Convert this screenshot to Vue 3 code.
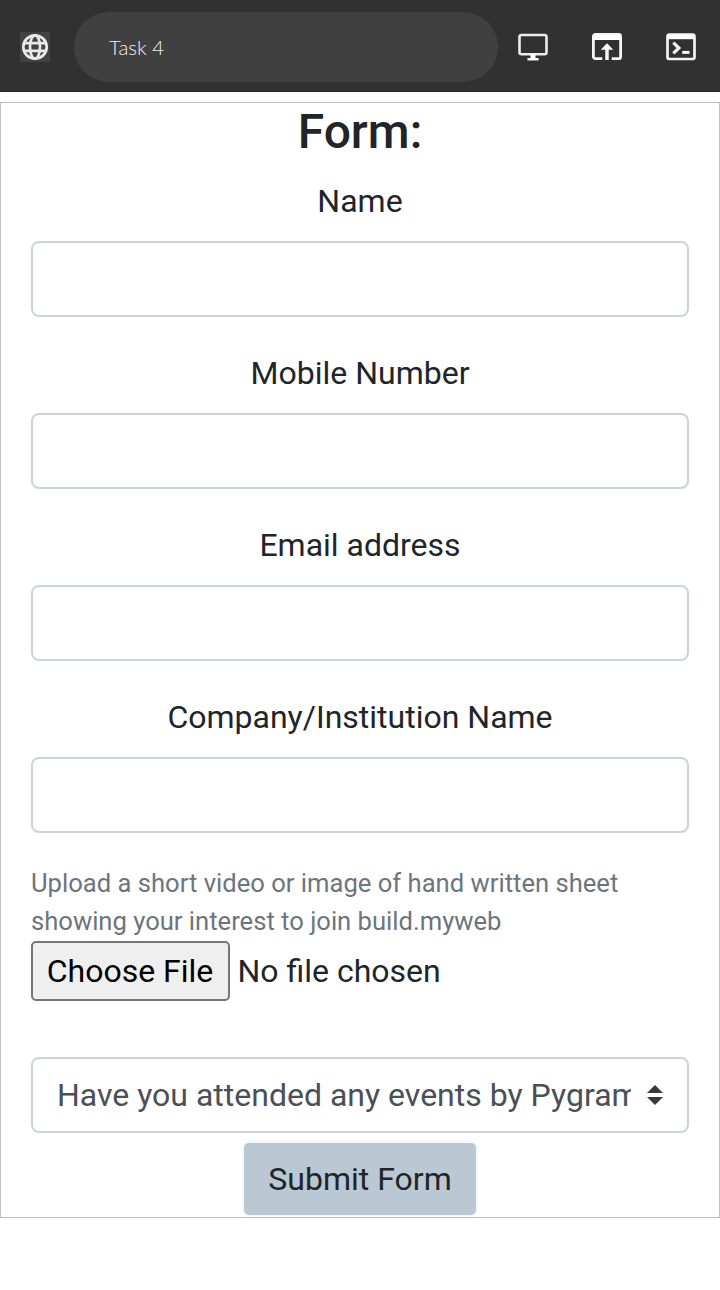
<script setup>
const fields = ['Name', 'Mobile Number', 'Email address', 'Company/Institution Name']
</script>

<template>
  <div class="page">
    <header class="toolbar">
      <span class="globe">
        <svg viewBox="0 0 30 30" width="30" height="30" fill="none" stroke="#e9e9e9" stroke-width="2.7">
          <circle cx="15" cy="15" r="11.7" />
          <ellipse cx="15" cy="15" rx="5" ry="11.7" />
          <path d="M4 11.1h22M4 18.9h22" />
        </svg>
      </span>
      <div class="address"><span>Task 4</span></div>
      <nav class="actions">
        <svg class="icon" viewBox="0 0 30 28" fill="none" stroke="#fff">
          <rect x="1.5" y="2" width="27" height="19.2" rx="2" stroke-width="2.6" stroke="#ececec" />
          <path d="M12.5 21h5v4h3v2.4h-11V25h3z" fill="#fff" stroke="none" />
        </svg>
        <svg class="icon" viewBox="0 0 30 28" fill="none" stroke="#f4f4f4">
          <path d="M10.3 25.7H3.4a2 2 0 0 1-2-2V3.5a2 2 0 0 1 2-2h23.2a2 2 0 0 1 2 2v20.2a2 2 0 0 1-2 2h-6.9" stroke-width="2.8" />
          <path d="M2 2h26v5H2z" fill="#fff" stroke="none" />
          <path d="M15 10.2l6.3 6.5h-4.6V27h-3.4V16.7H8.7z" fill="#fff" stroke="none" />
        </svg>
        <svg class="icon" viewBox="0 0 30 28" fill="none" stroke="#f4f4f4">
          <rect x="1.5" y="1.7" width="27" height="24.3" rx="2" stroke-width="2.7" />
          <path d="M2 1.5h26v4.7H2z" fill="#fff" stroke="none" />
          <path d="M7.3 9.6l5.6 5.4-5.6 5.4" stroke-width="3.2" />
          <path d="M16.2 19.4h7.3" stroke-width="3" />
        </svg>
      </nav>
    </header>

    <main class="sheet">
      <h4>Form:</h4>
      <div v-for="(field, i) in fields" :key="field" class="group">
        <label :for="'field' + i">{{ field }}</label>
        <input :id="'field' + i" type="text" class="control" />
      </div>
      <p class="hint">Upload a short video or image of hand written sheet showing your interest to join build.myweb</p>
      <div class="file">
        <button type="button" class="choose">Choose File</button>
        <span class="status">No file chosen</span>
      </div>
      <div class="select">
        <span class="value">Have you attended any events by Pygram</span>
        <svg viewBox="0 0 16 20" width="16" height="20" fill="#343a40">
          <path d="M8 0l8 8H0zM8 20l8-8H0z" />
        </svg>
      </div>
      <button type="button" class="submit">Submit Form</button>
    </main>
  </div>
</template>

<style>
body { background: #fff; }
</style>

<style scoped>
* { box-sizing: border-box; }
.page {
  width: 720px;
  height: 1290px;
  overflow: hidden;
  font-family: Roboto, sans-serif;
  font-size: 32px;
  line-height: 48px;
  color: #212529;
}
.toolbar {
  display: flex;
  align-items: center;
  height: 92px;
  padding: 0 24px 0 20px;
  background: #313131;
  border-bottom: 1px solid #2b2b2b;
}
.globe { width: 30px; height: 30px; margin-top: 2px; background: #424242; }
.globe svg { display: block; }
.address {
  display: flex;
  align-items: center;
  width: 424px;
  height: 70px;
  margin: 2px 0 0 24px;
  padding: 0 0 0 35px;
  border-radius: 35px;
  background: #404040;
  color: #f2f2f2;
  font-family: Lato, sans-serif;
  font-weight: 300;
  font-size: 20.4px;
  line-height: 24px;
}
.actions { display: flex; gap: 44px; margin-left: 20px; margin-top: 3px; }
.icon { display: block; width: 30px; height: 28px; }
.sheet {
  display: flex;
  flex-direction: column;
  height: 1116px;
  margin-top: 10px;
  padding: 0 30px;
  border: 1px solid #bfbfbf;
}
h4 {
  margin: 0 0 16px;
  font-size: 48px;
  line-height: 58px;
  font-weight: 500;
  text-align: center;
}
.group { margin-bottom: 32px; }
label { display: block; margin-bottom: 16px; text-align: center; }
.control {
  display: block;
  width: 100%;
  height: 76px;
  padding: 12px 24px;
  border: 2px solid #ced3d7;
  border-radius: 8px;
  background: #fff;
  font: inherit;
  outline: none;
}
.hint {
  margin: -1px 0 1px;
  font-size: 25.6px;
  line-height: 38px;
  color: #6c757d;
}
.file { display: flex; align-items: center; gap: 7.5px; height: 60px; }
.status { font-variant-ligatures: common-ligatures; text-rendering: optimizeLegibility; }
.choose {
  width: 199px;
  height: 60px;
  padding: 0 1px 0 0;
  border: 2px solid #767676;
  border-radius: 5px;
  background: #efefef;
  color: #000;
  font: inherit;
  white-space: nowrap;
}
.select {
  display: flex;
  align-items: center;
  justify-content: space-between;
  height: 76px;
  margin-top: 56px;
  padding: 0 24px;
  border: 2px solid #ced3d7;
  border-radius: 8px;
  color: #495057;
}
.value { width: 574px; overflow: hidden; white-space: nowrap; }
.submit {
  align-self: center;
  width: 232px;
  height: 72px;
  margin-top: 10px;
  padding: 0;
  border: 0;
  border-radius: 5px;
  background: #bac8d3;
  box-shadow: 0 0 0 2px #f5f9fc;
  color: #212529;
  font: inherit;
}
</style>
